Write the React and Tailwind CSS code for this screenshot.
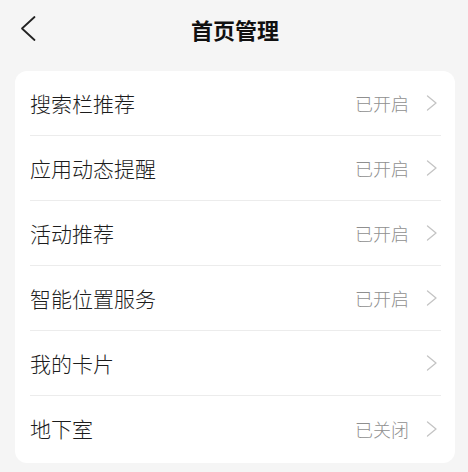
import React from 'react';

const items = [
  { title: '搜索栏推荐', status: '已开启' },
  { title: '应用动态提醒', status: '已开启' },
  { title: '活动推荐', status: '已开启' },
  { title: '智能位置服务', status: '已开启' },
  { title: '我的卡片', status: '' },
  { title: '地下室', status: '已关闭' },
];

const font = { fontFamily: '"Noto Sans CJK SC", "Noto Sans", sans-serif' };

const Chevron = () => (
  <svg width="12" height="16" viewBox="0 0 12 16" className="shrink-0">
    <polyline points="1.5,1 10,8 1.5,15" fill="none" stroke="#c4c4c4" strokeWidth="1.3" strokeLinecap="round" strokeLinejoin="round" />
  </svg>
);

const Row = ({ title, status, last }) => (
  <div className={`flex h-[65px] items-center justify-between pr-[3px] ${last ? '' : 'border-b border-[#ececec]'}`}>
    <span className="text-[21px] font-light leading-none text-[#1c1c1c]">{title}</span>
    <div className="flex items-center gap-[17px]">
      {status && <span className="text-[18px] font-light leading-none text-[#8f8f8f]">{status}</span>}
      <Chevron />
    </div>
  </div>
);

export default function App() {
  return (
    <div className="h-[472px] w-[468px] overflow-hidden bg-[#f5f5f5]" style={font}>
      <div className="relative flex h-[57px] items-center justify-center">
        <button className="absolute left-[19px] top-[15px]">
          <svg width="18" height="27" viewBox="0 0 18 27">
            <polyline points="15.5,2 3,13.5 15.5,25" fill="none" stroke="#222" strokeWidth="1.8" strokeLinecap="round" strokeLinejoin="round" />
          </svg>
        </button>
        <h1 className="pl-[2px] text-[22px] font-bold leading-none text-[#111]">首页管理</h1>
      </div>
      <div className="ml-[15px] mr-[13px] mt-[14px] rounded-[12px] bg-white pb-[2px] pl-[15px] pr-[14px]">
        {items.map((it, i) => (
          <Row key={it.title} {...it} last={i === items.length - 1} />
        ))}
      </div>
    </div>
  );
}
